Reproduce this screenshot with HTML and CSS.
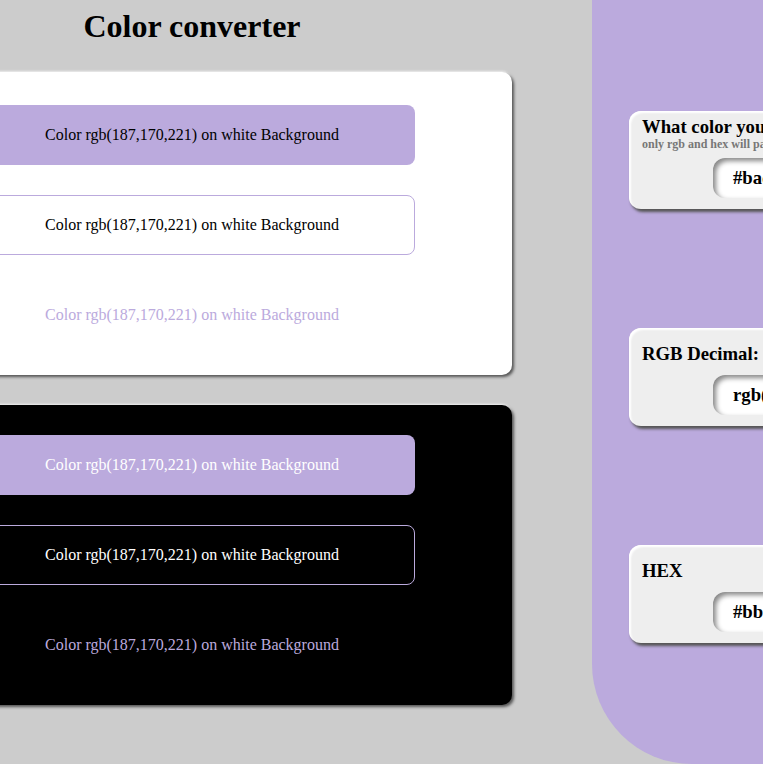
FILE: index.html
```html
<!DOCTYPE html>
<html lang="en">
<head>
<meta charset="utf-8">
<title>Color converter</title>
<link rel="stylesheet" href="styles.css">
</head>
<body>
<div class="page">
  <main class="left">
    <h1 class="title">Color converter</h1>
    <section class="sample sample-light">
      <div class="swatch swatch-fill">Color rgb(187,170,221) on white Background</div>
      <div class="swatch swatch-border">Color rgb(187,170,221) on white Background</div>
      <div class="swatch swatch-text">Color rgb(187,170,221) on white Background</div>
    </section>
    <section class="sample sample-dark">
      <div class="swatch swatch-fill">Color rgb(187,170,221) on white Background</div>
      <div class="swatch swatch-border">Color rgb(187,170,221) on white Background</div>
      <div class="swatch swatch-text">Color rgb(187,170,221) on white Background</div>
    </section>
  </main>
  <aside class="panel">
    <div class="field">
      <div class="field-head field-head-note">
        <h3 class="field-title">What color you want to convert?</h3>
        <p class="field-note">only rgb and hex will pass</p>
      </div>
      <div class="field-input">#bad</div>
    </div>
    <div class="field">
      <div class="field-head">
        <h3 class="field-title">RGB Decimal:</h3>
      </div>
      <div class="field-input">rgb(187,170,221)</div>
    </div>
    <div class="field">
      <div class="field-head">
        <h3 class="field-title">HEX</h3>
      </div>
      <div class="field-input">#bbaadd</div>
    </div>
  </aside>
</div>
</body>
</html>
```
FILE: styles.css
```css
html, body {
  margin: 0;
  padding: 0;
  height: 100%;
  overflow: hidden;
}
body {
  background: #cccccc;
  font-family: "Liberation Serif", "Times New Roman", serif;
  color: #000;
}
.page {
  display: flex;
  justify-content: center;
  gap: 80px;
  height: 764px;
}
.left {
  flex: 0 0 640px;
  display: flex;
  flex-direction: column;
}
.title {
  margin: 8px 0 27px;
  font-size: 32px;
  font-weight: bold;
  text-align: center;
  line-height: normal;
}
.sample {
  display: flex;
  flex-direction: column;
  align-items: center;
  gap: 30px;
  border-radius: 10px;
  box-shadow: 2px 2px 3px #555, 0 -1px 2px #f4f4f4;
}
.sample-light {
  background: #fff;
  padding: 33px 0 30px;
}
.sample-dark {
  background: #000;
  padding: 30px 0 30px;
  margin-top: 30px;
}
.swatch {
  box-sizing: border-box;
  width: 446px;
  height: 60px;
  display: flex;
  align-items: center;
  justify-content: center;
  font-size: 16px;
  border-radius: 8px;
}
.swatch-fill {
  background: #bbaadd;
}
.swatch-border {
  border: 1px solid #bbaadd;
}
.swatch-text {
  color: #bbaadd;
}
.sample-dark .swatch-fill,
.sample-dark .swatch-border {
  color: #fff;
}
.panel {
  flex: 0 0 299px;
  height: 764px;
  background: #bbaadd;
  border-bottom-left-radius: 100px;
  display: flex;
  flex-direction: column;
  gap: 119px;
  padding: 111px 0 0 37px;
  box-sizing: border-box;
}
.field {
  box-sizing: border-box;
  width: 240px;
  height: 98px;
  background: #eeeeee;
  border-radius: 12px;
  padding: 0 0 0 13px;
  box-shadow: inset 2px 2px 2px #fff, 2px 3px 3px #555;
  white-space: nowrap;
}
.field-head {
  height: 47px;
  display: flex;
  flex-direction: column;
  justify-content: center;
}
.field-title {
  margin: 4px 0 0;
  font-size: 18.72px;
  font-weight: bold;
  line-height: 21px;
}
.field-head-note .field-title {
  margin-top: 0;
}
.field-note {
  margin: 0 0 2px;
  font-size: 12px;
  font-weight: bold;
  color: #777;
  line-height: 14px;
}
.field-input {
  box-sizing: border-box;
  margin-left: 71px;
  height: 40px;
  width: 200px;
  background: #fff;
  border-radius: 12px;
  padding: 0 0 0 20px;
  display: flex;
  align-items: center;
  font-size: 18.72px;
  font-weight: bold;
  box-shadow: inset 3px 3px 5px #888;
}
```
